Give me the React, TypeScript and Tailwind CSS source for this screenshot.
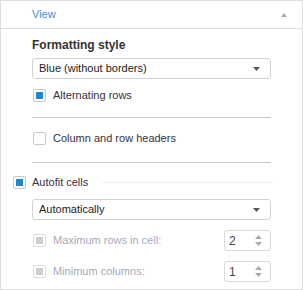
import React from "react";

function Check({ checked, disabled }: { checked?: boolean; disabled?: boolean }) {
  return (
    <div
      className={
        "w-[13px] h-[13px] shrink-0 rounded-[2px] border flex items-center justify-center bg-white " +
        (disabled ? "border-[#dcdcdc]" : "border-[#c8c8c8]")
      }
    >
      {checked && !disabled && <div className="w-[7px] h-[7px] bg-[#1e88d2]" />}
      {disabled && <div className="w-[7px] h-[7px] bg-[#cdcdcd]" />}
    </div>
  );
}

function Select({ value }: { value: string }) {
  return (
    <div className="h-[21px] w-[239px] rounded-[3px] border border-[#d2d2d2] flex items-center justify-between pl-[6px] pr-[10px] text-[#222]">
      <span>{value}</span>
      <svg width="7" height="4" viewBox="0 0 7 4">
        <path d="M0 0H7L3.5 4Z" fill="#555" />
      </svg>
    </div>
  );
}

function Spin({ value }: { value: string }) {
  return (
    <div className="h-[21px] w-[47px] rounded-[3px] border border-[#dadada] flex items-center justify-between pl-[4px] pr-[8px] text-[#444]">
      <span className="text-[12px]">{value}</span>
      <div className="flex flex-col gap-[3px]">
        <svg width="7" height="4" viewBox="0 0 7 4">
          <path d="M0 4H7L3.5 0Z" fill="#aaa" />
        </svg>
        <svg width="7" height="4" viewBox="0 0 7 4">
          <path d="M0 0H7L3.5 4Z" fill="#aaa" />
        </svg>
      </div>
    </div>
  );
}

export default function App() {
  return (
    <div className="w-[303px] h-[290px] border border-[#dddddd] bg-white font-['Liberation_Sans',Arial,sans-serif] text-[11px] text-[#333344]">
      <div className="h-[28px] border-b border-[#dddddd] flex items-center justify-between pl-[31px] pr-[15px]">
        <span className="text-[#3d8fd9] text-[11px]">View</span>
        <svg width="6" height="4" viewBox="0 0 6 4">
          <path d="M0 4H6L3 0Z" fill="#aaa" />
        </svg>
      </div>
      <div className="pl-[31px] pt-[8px]">
        <div className="font-bold text-[12px] leading-[16px] text-[#333]">Formatting style</div>
        <div className="mt-[5px]">
          <Select value="Blue (without borders)" />
        </div>
        <div className="mt-[10px] flex items-center gap-[7px] h-[13px] pl-[1px]">
          <Check checked />
          <span>Alternating rows</span>
        </div>
        <div className="mt-[15px] h-px w-[239px] bg-[#c8c8c8]" />
        <div className="mt-[14px] flex items-center gap-[7px] h-[13px] pl-[1px]">
          <Check />
          <span>Column and row headers</span>
        </div>
        <div className="mt-[17px] h-px w-[239px] bg-[#c8c8c8]" />
      </div>
      <div className="mt-[13px] pl-[12px] flex items-center h-[13px]">
        <Check checked />
        <span className="ml-[6px]">Autofit cells</span>
        <div className="ml-[14px] h-px w-[171px] bg-[#efefef]" />
      </div>
      <div className="pl-[31px]">
        <div className="mt-[10px]">
          <Select value="Automatically" />
        </div>
        <div className="mt-[10px] flex items-center justify-between w-[239px]">
          <div className="flex items-center gap-[7px] pl-[1px] text-[#a9a9bb]">
            <Check disabled />
            <span>Maximum rows in cell:</span>
          </div>
          <Spin value="2" />
        </div>
        <div className="mt-[10px] flex items-center justify-between w-[239px]">
          <div className="flex items-center gap-[7px] pl-[1px] text-[#a9a9bb]">
            <Check disabled />
            <span>Minimum columns:</span>
          </div>
          <Spin value="1" />
        </div>
      </div>
    </div>
  );
}
